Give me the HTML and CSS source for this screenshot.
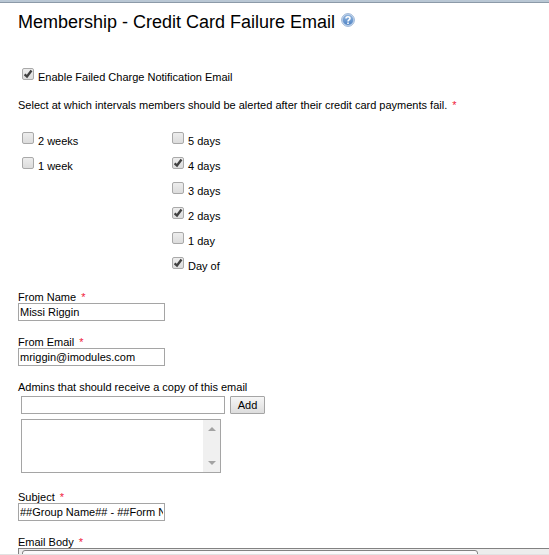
FILE: index.html
```html
<!DOCTYPE html>
<html lang="en">
<head>
<meta charset="utf-8">
<title>Membership - Credit Card Failure Email</title>
<link rel="stylesheet" href="styles.css">
</head>
<body>
<main class="page">
  <header class="heading">
    <h1>Membership - Credit Card Failure Email</h1>
    <a class="help" href="#" aria-label="Help">
      <svg width="14" height="14" viewBox="0 0 14 14">
        <defs><linearGradient id="ball" x1="0" y1="0" x2="0" y2="1"><stop offset="0" stop-color="#94b8e0"/><stop offset="1" stop-color="#4d82c4"/></linearGradient></defs>
        <circle cx="7" cy="7" r="6.4" fill="#d3e2f3" stroke="#9ab4d6" stroke-width="1"/>
        <circle cx="7" cy="7" r="5.1" fill="url(#ball)" stroke="#6f97cb" stroke-width=".5"/>
        <path d="M5 5.5C5 3.3 9 3.2 9 5.5C9 6.9 7 6.8 7 8.4M7 9.4V10.9" fill="none" stroke="#fff" stroke-width="1.6"/>
      </svg>
    </a>
  </header>
  <form>
    <label class="check"><input type="checkbox" checked><span>Enable Failed Charge Notification Email</span></label>
    <p class="intro">Select at which intervals members should be alerted after their credit card payments fail. <span class="req">*</span></p>
    <div class="intervals">
      <div class="column">
        <label class="check"><input type="checkbox"><span>2 weeks</span></label>
        <label class="check"><input type="checkbox"><span>1 week</span></label>
      </div>
      <div class="column">
        <label class="check"><input type="checkbox"><span>5 days</span></label>
        <label class="check"><input type="checkbox" checked><span>4 days</span></label>
        <label class="check"><input type="checkbox"><span>3 days</span></label>
        <label class="check"><input type="checkbox" checked><span>2 days</span></label>
        <label class="check"><input type="checkbox"><span>1 day</span></label>
        <label class="check"><input type="checkbox" checked><span>Day of</span></label>
      </div>
    </div>
    <div class="field">
      <label for="from-name">From Name <span class="req">*</span></label>
      <input class="text" id="from-name" type="text" value="Missi Riggin">
    </div>
    <div class="field">
      <label for="from-email">From Email <span class="req">*</span></label>
      <input class="text" id="from-email" type="text" value="mriggin@imodules.com">
    </div>
    <div class="field">
      <label for="admin">Admins that should receive a copy of this email</label>
      <div class="admins">
        <div class="add-row">
          <input class="text wide" id="admin" type="text">
          <button class="add" type="button">Add</button>
        </div>
        <div class="listbox">
          <select multiple size="3" aria-label="Admins"></select>
          <div class="scrollbar">
            <svg width="8" height="4" viewBox="0 0 8 4"><path d="M0 4L4 0L8 4Z" fill="#a3a3a3"/></svg>
            <svg width="8" height="4" viewBox="0 0 8 4"><path d="M0 0H8L4 4Z" fill="#a3a3a3"/></svg>
          </div>
        </div>
      </div>
    </div>
    <div class="field">
      <label for="subject">Subject <span class="req">*</span></label>
      <input class="text" id="subject" type="text" value="##Group Name## - ##Form Name##">
    </div>
    <div class="field body-field">
      <div class="body-label">Email Body <span class="req">*</span></div>
      <div class="editor"><div class="toolbar"></div></div>
    </div>
  </form>
</main>
</body>
</html>
```
FILE: styles.css
```css
* { box-sizing: border-box; }
body {
  display: flex;
  flex-direction: column;
  margin: 0;
  height: 100vh;
  overflow: hidden;
  border-top: 2px solid #b9c7d4;
  background: #fff;
  color: #000;
  font: 11px/12px "Liberation Sans", Arial, sans-serif;
}
.page {
  flex: 1;
  min-height: 0;
  overflow: hidden;
  padding: 7px 0 0 18px;
  border-top: 1px solid #8c9aa8;
  border-bottom: 1px solid #e2e2e2;
}
.heading { display: flex; gap: 6px; margin-bottom: 34px; }
h1 { margin: 0; font-size: 18px; font-weight: normal; line-height: 24px; }
.help { height: 14px; margin-top: 3px; }
.help svg { display: block; }
.check {
  display: flex;
  align-items: flex-end;
  gap: 4px;
  width: fit-content;
  height: 15px;
  margin-left: 4px;
}
.check input {
  appearance: none;
  width: 12px;
  height: 12px;
  margin: 0 0 3px;
  border: 1px solid #a9a9a9;
  border-radius: 2px;
  background: linear-gradient(#ededed, #dcdcdc);
}
.check input:checked {
  background: url("data:image/svg+xml,%3Csvg xmlns='http://www.w3.org/2000/svg' viewBox='0 0 10 10'%3E%3Cpath d='M1.6 5.3L4 7.5L8.5 1.5' fill='none' stroke='%23404040' stroke-width='2.3'/%3E%3C/svg%3E") center / 10px 10px no-repeat, linear-gradient(#ededed, #dcdcdc);
}
.intro { margin: 16px 0 21px; }
.req { margin-left: 2px; color: #f0203c; }
.intervals { display: grid; grid-template-columns: 150px 1fr; margin-bottom: 19px; }
.column { display: flex; flex-direction: column; gap: 10px; }
.field { display: flex; flex-direction: column; align-items: flex-start; margin-bottom: 15px; }
.text {
  width: 147px;
  height: 18px;
  padding: 0 1px;
  border: 1px solid #a5a5a5;
  background: #fff;
  color: #000;
  font: inherit;
}
.wide { width: 204px; }
.admins { margin: 3px 0 3px 3px; }
.add-row { display: flex; gap: 5px; margin-bottom: 5px; }
.add {
  width: 35px;
  height: 18px;
  padding: 0;
  border: 1px solid #a5a5a5;
  border-radius: 1px;
  background: linear-gradient(#f6f6f6, #dddddd);
  color: #000;
  font: inherit;
}
.listbox { display: flex; width: 200px; height: 54px; border: 1px solid #a5a5a5; }
.listbox select {
  flex: 1;
  min-width: 0;
  height: 100%;
  border: 0;
  background: #fff;
  overflow: hidden;
}
.scrollbar {
  display: flex;
  flex-direction: column;
  align-items: center;
  justify-content: space-between;
  width: 17px;
  padding: 7px 0;
  background: #f0f0f0;
}
.body-field { align-items: stretch; margin: 0; }
.editor {
  height: 300px;
  padding: 1px 0 0 3px;
  border: 1px solid #828282;
  border-right: 0;
  background: #ededed;
}
.toolbar {
  width: 456px;
  max-width: 90%;
  height: 26px;
  border: 1px solid #828282;
  border-radius: 3px;
  background: #fbf9fb;
}
```
